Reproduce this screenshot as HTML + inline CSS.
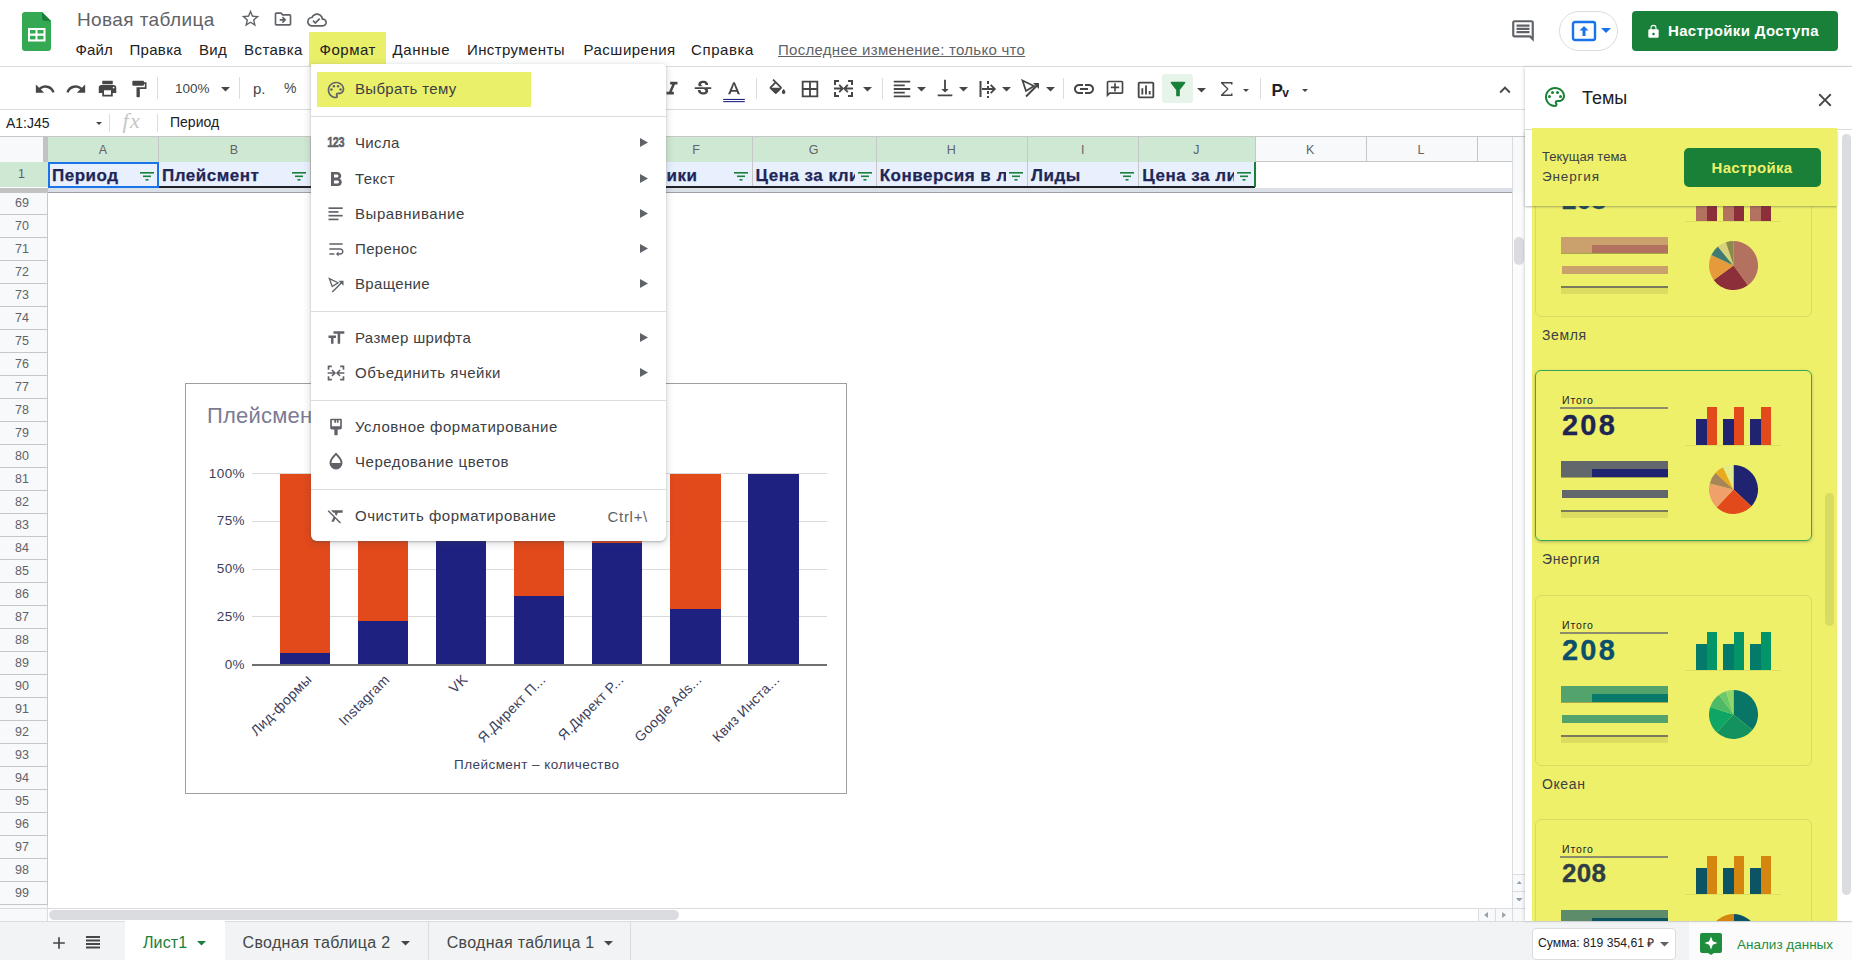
<!DOCTYPE html><html><head><meta charset="utf-8"><style>
html,body{margin:0;padding:0;width:1852px;height:960px;overflow:hidden;background:#fff;}
body{position:relative;font-family:"Liberation Sans",sans-serif;}
.t{position:absolute;white-space:nowrap;line-height:1;}
.i{position:absolute;display:block;}
.r{position:absolute;box-sizing:border-box;}
</style></head><body>
<svg class="i" style="left:22px;top:11.5px;" width="29" height="40" viewBox="0 0 29 40" fill="none"><path d="M2 0h18l9 9v27a3 3 0 0 1-3 3H3a3 3 0 0 1-3-3V3a3 3 0 0 1 3-3z" fill="#34a853"/><path d="M20 0l9 9h-6a3 3 0 0 1-3-3z" fill="#188038"/><rect x="6" y="16" width="17.5" height="13.5" fill="#fff"/><rect x="8" y="18" width="5.5" height="3.5" fill="#34a853"/><rect x="15.5" y="18" width="6" height="3.5" fill="#34a853"/><rect x="8" y="23.8" width="5.5" height="3.6" fill="#34a853"/><rect x="15.5" y="23.8" width="6" height="3.6" fill="#34a853"/></svg>
<div class="t" style="left:77px;top:10px;font-size:19px;color:#5f6368;font-weight:400;letter-spacing:0.4px;">Новая таблица</div>
<svg class="i" style="left:240px;top:8px;" width="21" height="21" viewBox="0 0 24 24" fill="#5f6368"><path d="M22 9.24l-7.19-.62L12 2 9.19 8.63 2 9.24l5.46 4.73L5.82 21 12 17.27 18.18 21l-1.63-7.03L22 9.24zM12 15.4l-3.76 2.27 1-4.28-3.32-2.88 4.38-.38L12 6.1l1.71 4.04 4.38.38-3.32 2.88 1 4.28L12 15.4z"/></svg>
<svg class="i" style="left:273px;top:9px;" width="20" height="20" viewBox="0 0 24 24" fill="#5f6368"><path d="M20 6h-8l-2-2H4c-1.1 0-1.99.9-1.99 2L2 18c0 1.1.9 2 2 2h16c1.1 0 2-.9 2-2V8c0-1.1-.9-2-2-2zm0 12H4V6h5.17l2 2H20v10zm-7.84-6H8v2h4.16l-1.59 1.59L11.99 17 16 13.01 11.99 9l-1.41 1.41L12.16 12z"/></svg>
<svg class="i" style="left:307px;top:10px;" width="20" height="20" viewBox="0 0 24 24" fill="#5f6368"><path d="M19.35 10.04C18.67 6.59 15.64 4 12 4 9.11 4 6.6 5.64 5.35 8.04 2.34 8.36 0 10.91 0 14c0 3.31 2.69 6 6 6h13c2.76 0 5-2.24 5-5 0-2.64-2.05-4.78-4.650-4.96zM19 18H6c-2.21 0-4-1.79-4-4 0-2.05 1.53-3.760 3.56-3.97l1.07-.11.5-.95C8.08 7.14 9.94 6 12 6c2.62 0 4.88 1.86 5.39 4.43l.3 1.5 1.53.11c1.56.1 2.78 1.41 2.780 2.96 0 1.65-1.35 3-3 3zm-9-3.82l-2.09-2.09L6.5 13.5 10 17l6.01-6.01-1.41-1.41z"/></svg>
<div class="r" style="left:309px;top:32px;width:77px;height:34px;background:#eaef6a;"></div>
<div class="t" style="left:75.5px;top:42px;font-size:15px;color:#202124;font-weight:400;letter-spacing:0.1px;">Файл</div>
<div class="t" style="left:129.5px;top:42px;font-size:15px;color:#202124;font-weight:400;letter-spacing:0.3px;">Правка</div>
<div class="t" style="left:199px;top:42px;font-size:15px;color:#202124;font-weight:400;letter-spacing:0.3px;">Вид</div>
<div class="t" style="left:244px;top:42px;font-size:15px;color:#202124;font-weight:400;letter-spacing:0.45px;">Вставка</div>
<div class="t" style="left:319.6px;top:42px;font-size:15px;color:#202124;font-weight:400;letter-spacing:0.5px;">Формат</div>
<div class="t" style="left:392.5px;top:42px;font-size:15px;color:#202124;font-weight:400;letter-spacing:0.6px;">Данные</div>
<div class="t" style="left:467px;top:42px;font-size:15px;color:#202124;font-weight:400;letter-spacing:0.4px;">Инструменты</div>
<div class="t" style="left:583.5px;top:42px;font-size:15px;color:#202124;font-weight:400;letter-spacing:0.5px;">Расширения</div>
<div class="t" style="left:691px;top:42px;font-size:15px;color:#202124;font-weight:400;letter-spacing:0.6px;">Справка</div>
<div class="t" style="left:778px;top:42px;font-size:15px;color:#5f6368;font-weight:400;letter-spacing:0.28px;text-decoration:underline;">Последнее изменение: только что</div>
<svg class="i" style="left:1510px;top:18px;" width="26" height="26" viewBox="0 0 24 24" fill="#5f6368"><path d="M21.99 4c0-1.1-.89-2-1.99-2H4c-1.1 0-2 .9-2 2v12c0 1.1.9 2 2 2h14l4 4-.01-18zM20 4v13.17L18.83 16H4V4h16zM6 12h12v2H6zm0-3h12v2H6zm0-3h12v2H6z"/></svg>
<div class="r" style="left:1559px;top:11px;width:59px;height:40px;border:1px solid #dadce0;border-radius:20px;"></div>
<svg class="i" style="left:1570px;top:19px;" width="28" height="24" viewBox="0 0 28 24" fill="none"><rect x="3" y="3" width="22" height="18" rx="2" fill="none" stroke="#1a73e8" stroke-width="2.4"/><path d="M14 7l-4.5 4.5h3V17h3v-5.5h3z" fill="#1a73e8"/></svg>
<svg class="i" style="left:1601px;top:28px;" width="10" height="6" viewBox="0 0 10 6" fill="none"><path d="M0 0h10L5 5z" fill="#1a73e8"/></svg>
<div class="r" style="left:1632px;top:11px;width:206px;height:40px;background:#188038;border-radius:4px;"></div>
<svg class="i" style="left:1646.5px;top:24px;" width="13" height="14.7" viewBox="0 0 15 17" fill="none"><path d="M12 6h-1V4.5a3.5 3.5 0 0 0-7 0V6H3a1.5 1.5 0 0 0-1.5 1.5v7A1.5 1.5 0 0 0 3 16h9a1.5 1.5 0 0 0 1.5-1.5v-7A1.5 1.5 0 0 0 12 6zM7.5 13a1.5 1.5 0 1 1 0-3 1.5 1.5 0 0 1 0 3zM9.8 6H5.2V4.5a2.3 2.3 0 0 1 4.6 0z" fill="#fff"/></svg>
<div class="t" style="left:1668px;top:23px;font-size:15px;color:#fff;font-weight:700;letter-spacing:0.35px;">Настройки Доступа</div>
<div class="r" style="left:0px;top:66px;width:1852px;height:1px;background:#dadce0;"></div>
<svg class="i" style="left:33.5px;top:77.5px;" width="22" height="22" viewBox="0 0 24 24" fill="#444746"><path d="M12.5 8c-2.65 0-5.05.99-6.9 2.6L2 7v9h9l-3.62-3.62c1.39-1.16 3.16-1.88 5.12-1.88 3.54 0 6.55 2.31 7.6 5.5l2.37-.78C21.08 11.030 17.15 8 12.5 8z"/></svg>
<svg class="i" style="left:65.0px;top:77.5px;" width="22" height="22" viewBox="0 0 24 24" fill="#444746"><path d="M18.4 10.6C16.55 8.99 14.15 8 11.5 8c-4.65 0-8.58 3.03-9.96 7.22L3.9 16c1.05-3.19 4.05-5.5 7.6-5.5 1.95 0 3.73.72 5.12 1.88L13 16h9V7l-3.6 3.6z"/></svg>
<svg class="i" style="left:96.5px;top:78.0px;" width="21" height="21" viewBox="0 0 24 24" fill="#444746"><path d="M19 8H5c-1.66 0-3 1.34-3 3v6h4v4h12v-4h4v-6c0-1.66-1.34-3-3-3zm-3 11H8v-5h8v5zm3-7c-.55 0-1-.45-1-1s.45-1 1-1 1 .45 1 1-.45 1-1 1zm-1-9H6v4h12V3z"/></svg>
<svg class="i" style="left:128.5px;top:78.5px;" width="20" height="20" viewBox="0 0 24 24" fill="#444746"><path d="M18 4V3c0-.55-.45-1-1-1H5c-.55 0-1 .45-1 1v4c0 .55.45 1 1 1h12c.55 0 1-.45 1-1V6h1v4H9v11c0 .55.45 1 1 1h2c.55 0 1-.45 1-1v-9h8V4h-3z"/></svg>
<div class="r" style="left:157px;top:77px;width:1px;height:22px;background:#dadce0;"></div>
<div class="t" style="left:175px;top:82px;font-size:13.5px;color:#444746;font-weight:400;letter-spacing:0px;">100%</div>
<svg class="i" style="left:221px;top:86.5px;" width="9" height="5.0" viewBox="0 0 9 5.0" fill="#444746"><path d="M0 0h9L4.5 4.5z"/></svg>
<div class="r" style="left:239px;top:77px;width:1px;height:22px;background:#dadce0;"></div>
<div class="t" style="left:253px;top:81px;font-size:15px;color:#444746;font-weight:400;letter-spacing:0px;">р.</div>
<div class="t" style="left:284px;top:81px;font-size:14px;color:#444746;font-weight:400;letter-spacing:0px;">%</div>
<svg class="i" style="left:661.0px;top:78.0px;" width="22" height="22" viewBox="0 0 24 24" fill="#444746"><path d="M10 4v3h2.21l-3.42 8H6v3h8v-3h-2.21l3.42-8H18V4z"/></svg>
<svg class="i" style="left:692.0px;top:78.0px;" width="22" height="22" viewBox="0 0 24 24" fill="#444746"><path d="M7.24 8.75c-.26-.48-.39-1.03-.39-1.67 0-.61.13-1.16.4-1.67.26-.5.63-.93 1.11-1.29.48-.35 1.05-.63 1.7-.83.66-.19 1.39-.29 2.18-.29.81 0 1.54.11 2.21.34.66.22 1.23.54 1.69.94.47.4.83.88 1.08 1.43.25.55.38 1.15.38 1.81h-3.01c0-.31-.05-.59-.15-.85-.09-.27-.24-.49-.44-.68-.2-.19-.45-.33-.75-.44-.3-.1-.66-.16-1.06-.16-.39 0-.74.04-1.030.13-.29.09-.53.21-.72.36-.19.16-.34.34-.44.55-.1.21-.15.43-.15.66 0 .48.25.88.74 1.21.38.25.77.48 1.41.7H7.39c-.05-.08-.11-.17-.15-.25zM21 12v-2H3v2h9.62c.18.07.4.14.55.2.37.17.66.34.87.51.21.17.35.36.43.57.07.2.11.43.11.69 0 .23-.05.45-.14.66-.09.2-.23.38-.42.53-.19.15-.42.26-.71.35-.29.08-.63.13-1.010.13-.43 0-.83-.04-1.18-.13s-.66-.23-.91-.42c-.25-.19-.45-.44-.59-.75-.14-.31-.25-.76-.25-1.21H6.4c0 .55.08 1.13.24 1.58.16.45.37.85.65 1.21.28.35.6.66.98.92.37.26.78.48 1.22.65.44.17.9.3 1.38.39.48.08.96.13 1.44.13.8 0 1.53-.09 2.18-.28s1.21-.45 1.67-.79c.46-.34.82-.77 1.07-1.27s.38-1.07.38-1.71c0-.6-.1-1.14-.31-1.61-.05-.11-.11-.23-.17-.33H21z"/></svg>
<svg class="i" style="left:721px;top:78px;" width="26" height="26" viewBox="0 0 24 24" fill="#444746"><path d="M9.5 12.8h5l.9 2.2h2.1L12.75 4h-1.5L6.5 15h2.1l.9-2.2zM12 5.98L13.87 11h-3.74L12 5.98z"/><rect x="2" y="19.3" width="20" height="1" fill="#1e237f"/><rect x="2" y="21.3" width="20" height="1" fill="#1e237f"/></svg>
<div class="r" style="left:756px;top:78px;width:1px;height:21px;background:#dadce0;"></div>
<svg class="i" style="left:766.5px;top:79.0px;" width="21" height="21" viewBox="0 0 24 24" fill="#444746"><path d="M16.56 8.94L7.62 0 6.21 1.41l2.38 2.38-5.15 5.150c-.59.59-.59 1.54 0 2.12l5.5 5.5c.29.29.68.44 1.06.44s.77-.15 1.06-.44l5.5-5.5c.59-.58.59-1.53 0-2.12zM5.21 10L10 5.21 14.79 10H5.21zM19 11.5s-2 2.17-2 3.5c0 1.1.9 2 2 2s2-.9 2-2c0-1.33-2-3.5-2-3.5z"/></svg>
<svg class="i" style="left:799.0px;top:77.5px;" width="22" height="22" viewBox="0 0 24 24" fill="#444746"><path d="M3 3v18h18V3H3zm8 16H5v-6h6v6zm0-8H5V5h6v6zm8 8h-6v-6h6v6zm0-8h-6V5h6v6z"/></svg>
<svg class="i" style="left:833px;top:79px;" width="21" height="19" viewBox="0 0 21 19" fill="#444746"><path d="M1 1h5v2H3v3H1zM1 13h2v3h3v2H1zM20 1h-5v2h3v3h2zM20 13h-2v3h-3v2h5z"/><path d="M1 8.5h6.5L5.5 6.5 6.8 5.2 11 9.5 6.8 13.8 5.5 12.5 7.5 10.5H1z"/><path d="M20 8.5h-6.5L15.5 6.5 14.2 5.2 10 9.5 14.2 13.8 15.5 12.5 13.5 10.5H20z" transform="translate(0 0)"/></svg>
<svg class="i" style="left:863px;top:86.5px;" width="9" height="5.0" viewBox="0 0 9 5.0" fill="#444746"><path d="M0 0h9L4.5 4.5z"/></svg>
<div class="r" style="left:882px;top:78px;width:1px;height:21px;background:#dadce0;"></div>
<svg class="i" style="left:891.0px;top:77.5px;" width="22" height="22" viewBox="0 0 24 24" fill="#444746"><path d="M15 15H3v2h12v-2zm0-8H3v2h12V7zM3 13h18v-2H3v2zm0 8h18v-2H3v2zM3 3v2h18V3H3z"/></svg>
<svg class="i" style="left:916.5px;top:86.5px;" width="9" height="5.0" viewBox="0 0 9 5.0" fill="#444746"><path d="M0 0h9L4.5 4.5z"/></svg>
<svg class="i" style="left:934.0px;top:77.0px;" width="22" height="22" viewBox="0 0 24 24" fill="#444746"><path d="M16 13h-3V3h-2v10H8l4 4 4-4zM4 19v2h16v-2H4z"/></svg>
<svg class="i" style="left:959px;top:86.5px;" width="9" height="5.0" viewBox="0 0 9 5.0" fill="#444746"><path d="M0 0h9L4.5 4.5z"/></svg>
<svg class="i" style="left:978px;top:78px;" width="19" height="22" viewBox="0 0 19 22" fill="#444746"><rect x="1.5" y="3" width="2" height="16"/><rect x="9" y="3" width="2" height="3"/><rect x="9" y="8" width="2" height="3"/><rect x="9" y="13" width="2" height="3"/><rect x="9" y="18" width="2" height="2"/><path d="M4 10h10.5l-2.5-2.5 1.3-1.3 4.8 4.8-4.8 4.8-1.3-1.3 2.5-2.5H4z"/></svg>
<svg class="i" style="left:1002px;top:86.5px;" width="9" height="5.0" viewBox="0 0 9 5.0" fill="#444746"><path d="M0 0h9L4.5 4.5z"/></svg>
<svg class="i" style="left:1021px;top:79px;" width="19" height="19" viewBox="0 0 19 19" fill="#444746"><path d="M1.5 1.5l11.5 5.5-8 5z" fill="none" stroke="#444746" stroke-width="1.8" stroke-linejoin="miter"/><path d="M5 17.5L16.5 6" stroke="#444746" stroke-width="1.9"/><path d="M12 4h6v6z"/></svg>
<svg class="i" style="left:1045.5px;top:86.5px;" width="9" height="5.0" viewBox="0 0 9 5.0" fill="#444746"><path d="M0 0h9L4.5 4.5z"/></svg>
<div class="r" style="left:1063px;top:78px;width:1px;height:21px;background:#dadce0;"></div>
<svg class="i" style="left:1072.0px;top:77.0px;" width="24" height="24" viewBox="0 0 24 24" fill="#444746"><path d="M3.9 12c0-1.71 1.39-3.1 3.1-3.1h4V7H7c-2.76 0-5 2.24-5 5s2.24 5 5 5h4v-1.9H7c-1.71 0-3.1-1.39-3.1-3.1zM8 13h8v-2H8v2zm9-6h-4v1.9h4c1.71 0 3.1 1.39 3.1 3.1s-1.39 3.1-3.1 3.1h-4V17h4c2.76 0 5-2.24 5-5s-2.24-5-5-5z"/></svg>
<svg class="i" style="left:1105.0px;top:79.0px;" width="20" height="20" viewBox="0 0 24 24" fill="#444746"><path d="M20 2H4c-1.1 0-1.99.9-1.99 2L2 22l4-4h14c1.1 0 2-.9 2-2V4c0-1.1-.9-2-2-2zm0 14H5.17L4 17.170V4h16v12zM11 5h2v4h4v2h-4v4h-2v-4H7V9h4z"/></svg>
<svg class="i" style="left:1135.0px;top:78.5px;" width="22" height="22" viewBox="0 0 24 24" fill="#444746"><path d="M19 3H5c-1.1 0-2 .9-2 2v14c0 1.1.9 2 2 2h14c1.1 0 2-.9 2-2V5c0-1.1-.9-2-2-2zm0 16H5V5h14v14zM7 10h2v7H7zm4-3h2v10h-2zm4 6h2v4h-2z"/></svg>
<div class="r" style="left:1162px;top:74px;width:31px;height:29px;background:#e6f4ea;border-radius:3px;"></div>
<svg class="i" style="left:1166.5px;top:78.0px;" width="22" height="22" viewBox="0 0 24 24" fill="#188038"><path d="M4.25 5.61C6.27 8.2 10 13 10 13v6c0 .55.45 1 1 1h2c.55 0 1-.45 1-1v-6s3.72-4.8 5.74-7.39c.51-.66.04-1.61-.79-1.61H5.04c-.83 0-1.3.95-.79 1.61z"/></svg>
<svg class="i" style="left:1197px;top:88px;" width="9" height="5.0" viewBox="0 0 9 5.0" fill="#444746"><path d="M0 0h9L4.5 4.5z"/></svg>
<svg class="i" style="left:1219.5px;top:80.5px;" width="13" height="16" viewBox="0 0 13 16" fill="#444746"><path d="M12.5 1H1v1.3L7 8 1 13.7V15h11.5v-2.5H11V13.5H3.3L8.7 8 3.3 2.5H11v1h1.5z"/></svg>
<svg class="i" style="left:1242.5px;top:88.5px;" width="6" height="3.5" viewBox="0 0 6 3.5" fill="#444746"><path d="M0 0h6L3.0 3.0z"/></svg>
<div class="r" style="left:1259.5px;top:78px;width:1px;height:21px;background:#dadce0;"></div>
<div class="t" style="left:1271.5px;top:82px;font-size:17px;color:#202124;font-weight:700;letter-spacing:-0.5px;">Р<span style="font-size:12px;position:relative;top:1px;letter-spacing:0">v</span></div>
<svg class="i" style="left:1301.5px;top:88.5px;" width="6" height="3.5" viewBox="0 0 6 3.5" fill="#444746"><path d="M0 0h6L3.0 3.0z"/></svg>
<svg class="i" style="left:1493.5px;top:78.5px;" width="22" height="22" viewBox="0 0 24 24" fill="#444746"><path d="M7.41 15.41L12 10.83l4.59 4.58L18 14l-6-6-6 6z"/></svg>
<div class="r" style="left:0px;top:109px;width:1525px;height:1px;background:#dadce0;"></div>
<div class="t" style="left:6px;top:116px;font-size:14px;color:#202124;font-weight:400;letter-spacing:0px;">A1:J45</div>
<svg class="i" style="left:95.5px;top:122px;" width="6" height="3.5" viewBox="0 0 6 3.5" fill="#444746"><path d="M0 0h6L3.0 3.0z"/></svg>
<div class="r" style="left:109px;top:114px;width:1px;height:18px;background:#dadce0;"></div>
<div class="t" style="left:122.5px;top:110px;font-size:22px;color:#c4c7c5;font-weight:400;letter-spacing:1.5px;font-family:'Liberation Serif',serif;"><i>fx</i></div>
<div class="r" style="left:157px;top:114px;width:1px;height:18px;background:#dadce0;"></div>
<div class="t" style="left:170px;top:115px;font-size:14px;color:#202124;font-weight:400;letter-spacing:0px;">Период</div>
<div class="r" style="left:0px;top:136px;width:1525px;height:1px;background:#c7c7c7;"></div>
<div class="r" style="left:0px;top:137px;width:1512px;height:25px;background:#f8f9fa;"></div>
<div class="r" style="left:48px;top:137px;width:1206.6px;height:25px;background:#cfe8d3;"></div>
<div class="r" style="left:43px;top:137px;width:5px;height:25px;background:#c2c2c2;"></div>
<div class="r" style="left:158px;top:137px;width:1px;height:25px;background:#c7c7c7;"></div>
<div class="t" style="left:98.0px;top:143.5px;font-size:12.5px;color:#5f6368;font-weight:400;letter-spacing:0px;"><span style="display:inline-block;width:10px;text-align:center">A</span></div>
<div class="r" style="left:310px;top:137px;width:1px;height:25px;background:#c7c7c7;"></div>
<div class="t" style="left:229.0px;top:143.5px;font-size:12.5px;color:#5f6368;font-weight:400;letter-spacing:0px;"><span style="display:inline-block;width:10px;text-align:center">B</span></div>
<div class="r" style="left:420px;top:137px;width:1px;height:25px;background:#c7c7c7;"></div>
<div class="t" style="left:360.0px;top:143.5px;font-size:12.5px;color:#5f6368;font-weight:400;letter-spacing:0px;"><span style="display:inline-block;width:10px;text-align:center">C</span></div>
<div class="r" style="left:530px;top:137px;width:1px;height:25px;background:#c7c7c7;"></div>
<div class="t" style="left:470.0px;top:143.5px;font-size:12.5px;color:#5f6368;font-weight:400;letter-spacing:0px;"><span style="display:inline-block;width:10px;text-align:center">D</span></div>
<div class="r" style="left:640.4px;top:137px;width:1px;height:25px;background:#c7c7c7;"></div>
<div class="t" style="left:580.2px;top:143.5px;font-size:12.5px;color:#5f6368;font-weight:400;letter-spacing:0px;"><span style="display:inline-block;width:10px;text-align:center">E</span></div>
<div class="r" style="left:751.6px;top:137px;width:1px;height:25px;background:#c7c7c7;"></div>
<div class="t" style="left:691.0px;top:143.5px;font-size:12.5px;color:#5f6368;font-weight:400;letter-spacing:0px;"><span style="display:inline-block;width:10px;text-align:center">F</span></div>
<div class="r" style="left:875.7px;top:137px;width:1px;height:25px;background:#c7c7c7;"></div>
<div class="t" style="left:808.6500000000001px;top:143.5px;font-size:12.5px;color:#5f6368;font-weight:400;letter-spacing:0px;"><span style="display:inline-block;width:10px;text-align:center">G</span></div>
<div class="r" style="left:1027px;top:137px;width:1px;height:25px;background:#c7c7c7;"></div>
<div class="t" style="left:946.35px;top:143.5px;font-size:12.5px;color:#5f6368;font-weight:400;letter-spacing:0px;"><span style="display:inline-block;width:10px;text-align:center">H</span></div>
<div class="r" style="left:1138.3px;top:137px;width:1px;height:25px;background:#c7c7c7;"></div>
<div class="t" style="left:1077.65px;top:143.5px;font-size:12.5px;color:#5f6368;font-weight:400;letter-spacing:0px;"><span style="display:inline-block;width:10px;text-align:center">I</span></div>
<div class="r" style="left:1254.6px;top:137px;width:1px;height:25px;background:#c7c7c7;"></div>
<div class="t" style="left:1191.4499999999998px;top:143.5px;font-size:12.5px;color:#5f6368;font-weight:400;letter-spacing:0px;"><span style="display:inline-block;width:10px;text-align:center">J</span></div>
<div class="r" style="left:1365.6px;top:137px;width:1px;height:25px;background:#c7c7c7;"></div>
<div class="t" style="left:1305.1px;top:143.5px;font-size:12.5px;color:#5f6368;font-weight:400;letter-spacing:0px;"><span style="display:inline-block;width:10px;text-align:center">K</span></div>
<div class="r" style="left:1476.5px;top:137px;width:1px;height:25px;background:#c7c7c7;"></div>
<div class="t" style="left:1416.05px;top:143.5px;font-size:12.5px;color:#5f6368;font-weight:400;letter-spacing:0px;"><span style="display:inline-block;width:10px;text-align:center">L</span></div>
<div class="r" style="left:1587px;top:137px;width:1px;height:25px;background:#c7c7c7;"></div>
<div class="t" style="left:1526.75px;top:143.5px;font-size:12.5px;color:#5f6368;font-weight:400;letter-spacing:0px;"><span style="display:inline-block;width:10px;text-align:center">M</span></div>
<div class="r" style="left:48px;top:161.5px;width:1206.6px;height:1.5px;background:#188038;"></div>
<div class="r" style="left:1254.6px;top:161px;width:257.4000000000001px;height:1px;background:#c7c7c7;"></div>
<div class="r" style="left:0px;top:162px;width:48px;height:25px;background:#cfe8d3;"></div>
<div class="t" style="left:18px;top:168px;font-size:12.5px;color:#5f6368;font-weight:400;letter-spacing:0px;">1</div>
<div class="r" style="left:48px;top:162px;width:1206.6px;height:25px;background:#e8f0fe;"></div>
<div class="r" style="left:48px;top:162px;width:89px;height:25px;overflow:hidden;"><div class="t" style="left:4px;top:4.5px;font-size:17px;font-weight:700;color:#1f2656;letter-spacing:0.5px;-webkit-text-stroke:0.25px #1f2656;">Период</div></div>
<div class="r" style="left:158px;top:162px;width:1px;height:25px;background:#c7c7c7;"></div>
<svg class="i" style="left:140px;top:172px;" width="14" height="9" viewBox="0 0 14 9" fill="#188038"><rect x="0" y="0" width="14" height="1.6"/><rect x="3" y="3.5" width="8" height="1.6"/><rect x="5.5" y="7" width="3" height="1.6"/></svg>
<div class="r" style="left:158px;top:162px;width:131px;height:25px;overflow:hidden;"><div class="t" style="left:4px;top:4.5px;font-size:17px;font-weight:700;color:#1f2656;letter-spacing:0.5px;-webkit-text-stroke:0.25px #1f2656;">Плейсмент</div></div>
<div class="r" style="left:310px;top:162px;width:1px;height:25px;background:#c7c7c7;"></div>
<svg class="i" style="left:292px;top:172px;" width="14" height="9" viewBox="0 0 14 9" fill="#188038"><rect x="0" y="0" width="14" height="1.6"/><rect x="3" y="3.5" width="8" height="1.6"/><rect x="5.5" y="7" width="3" height="1.6"/></svg>
<div class="r" style="left:310px;top:162px;width:89px;height:25px;overflow:hidden;"><div class="t" style="left:4px;top:4.5px;font-size:17px;font-weight:700;color:#1f2656;letter-spacing:0.5px;-webkit-text-stroke:0.25px #1f2656;"></div></div>
<div class="r" style="left:420px;top:162px;width:1px;height:25px;background:#c7c7c7;"></div>
<svg class="i" style="left:402px;top:172px;" width="14" height="9" viewBox="0 0 14 9" fill="#188038"><rect x="0" y="0" width="14" height="1.6"/><rect x="3" y="3.5" width="8" height="1.6"/><rect x="5.5" y="7" width="3" height="1.6"/></svg>
<div class="r" style="left:420px;top:162px;width:89px;height:25px;overflow:hidden;"><div class="t" style="left:4px;top:4.5px;font-size:17px;font-weight:700;color:#1f2656;letter-spacing:0.5px;-webkit-text-stroke:0.25px #1f2656;"></div></div>
<div class="r" style="left:530px;top:162px;width:1px;height:25px;background:#c7c7c7;"></div>
<svg class="i" style="left:512px;top:172px;" width="14" height="9" viewBox="0 0 14 9" fill="#188038"><rect x="0" y="0" width="14" height="1.6"/><rect x="3" y="3.5" width="8" height="1.6"/><rect x="5.5" y="7" width="3" height="1.6"/></svg>
<div class="r" style="left:530px;top:162px;width:89.39999999999998px;height:25px;overflow:hidden;"><div class="t" style="left:4px;top:4.5px;font-size:17px;font-weight:700;color:#1f2656;letter-spacing:0.5px;-webkit-text-stroke:0.25px #1f2656;"></div></div>
<div class="r" style="left:640.4px;top:162px;width:1px;height:25px;background:#c7c7c7;"></div>
<svg class="i" style="left:622.4px;top:172px;" width="14" height="9" viewBox="0 0 14 9" fill="#188038"><rect x="0" y="0" width="14" height="1.6"/><rect x="3" y="3.5" width="8" height="1.6"/><rect x="5.5" y="7" width="3" height="1.6"/></svg>
<div class="r" style="left:640.4px;top:162px;width:90.20000000000005px;height:25px;overflow:hidden;"><div class="t" style="left:4px;top:4.5px;font-size:17px;font-weight:700;color:#1f2656;letter-spacing:0.5px;-webkit-text-stroke:0.25px #1f2656;">Клики</div></div>
<div class="r" style="left:751.6px;top:162px;width:1px;height:25px;background:#c7c7c7;"></div>
<svg class="i" style="left:733.6px;top:172px;" width="14" height="9" viewBox="0 0 14 9" fill="#188038"><rect x="0" y="0" width="14" height="1.6"/><rect x="3" y="3.5" width="8" height="1.6"/><rect x="5.5" y="7" width="3" height="1.6"/></svg>
<div class="r" style="left:751.6px;top:162px;width:103.10000000000002px;height:25px;overflow:hidden;"><div class="t" style="left:4px;top:4.5px;font-size:17px;font-weight:700;color:#1f2656;letter-spacing:0.5px;-webkit-text-stroke:0.25px #1f2656;">Цена за клик</div></div>
<div class="r" style="left:875.7px;top:162px;width:1px;height:25px;background:#c7c7c7;"></div>
<svg class="i" style="left:857.7px;top:172px;" width="14" height="9" viewBox="0 0 14 9" fill="#188038"><rect x="0" y="0" width="14" height="1.6"/><rect x="3" y="3.5" width="8" height="1.6"/><rect x="5.5" y="7" width="3" height="1.6"/></svg>
<div class="r" style="left:875.7px;top:162px;width:130.29999999999995px;height:25px;overflow:hidden;"><div class="t" style="left:4px;top:4.5px;font-size:17px;font-weight:700;color:#1f2656;letter-spacing:0.5px;-webkit-text-stroke:0.25px #1f2656;">Конверсия в лид</div></div>
<div class="r" style="left:1027px;top:162px;width:1px;height:25px;background:#c7c7c7;"></div>
<svg class="i" style="left:1009px;top:172px;" width="14" height="9" viewBox="0 0 14 9" fill="#188038"><rect x="0" y="0" width="14" height="1.6"/><rect x="3" y="3.5" width="8" height="1.6"/><rect x="5.5" y="7" width="3" height="1.6"/></svg>
<div class="r" style="left:1027px;top:162px;width:90.29999999999995px;height:25px;overflow:hidden;"><div class="t" style="left:4px;top:4.5px;font-size:17px;font-weight:700;color:#1f2656;letter-spacing:0.5px;-webkit-text-stroke:0.25px #1f2656;">Лиды</div></div>
<div class="r" style="left:1138.3px;top:162px;width:1px;height:25px;background:#c7c7c7;"></div>
<svg class="i" style="left:1120.3px;top:172px;" width="14" height="9" viewBox="0 0 14 9" fill="#188038"><rect x="0" y="0" width="14" height="1.6"/><rect x="3" y="3.5" width="8" height="1.6"/><rect x="5.5" y="7" width="3" height="1.6"/></svg>
<div class="r" style="left:1138.3px;top:162px;width:95.29999999999995px;height:25px;overflow:hidden;"><div class="t" style="left:4px;top:4.5px;font-size:17px;font-weight:700;color:#1f2656;letter-spacing:0.5px;-webkit-text-stroke:0.25px #1f2656;">Цена за лид</div></div>
<div class="r" style="left:1254.6px;top:162px;width:1px;height:25px;background:#c7c7c7;"></div>
<svg class="i" style="left:1236.6px;top:172px;" width="14" height="9" viewBox="0 0 14 9" fill="#188038"><rect x="0" y="0" width="14" height="1.6"/><rect x="3" y="3.5" width="8" height="1.6"/><rect x="5.5" y="7" width="3" height="1.6"/></svg>
<div class="r" style="left:48px;top:186px;width:1206.6px;height:1.5px;background:#202124;"></div>
<div class="r" style="left:1253.6px;top:162px;width:2px;height:25px;background:#188038;"></div>
<div class="r" style="left:48px;top:162px;width:110.5px;height:25.5px;border:2px solid #1a73e8;"></div>
<div class="r" style="left:0px;top:187.5px;width:1512px;height:5px;background:#dadfe8;"></div>
<div class="r" style="left:0px;top:191.5px;width:1512px;height:1.5px;background:#9aa0a6;"></div>
<div class="r" style="left:0px;top:187.5px;width:48px;height:5px;background:#c2c2c2;"></div>
<div class="r" style="left:0px;top:193px;width:48px;height:720px;background:#f8f9fa;"></div>
<div class="r" style="left:47px;top:193px;width:1px;height:715px;background:#c7c7c7;"></div>
<div class="r" style="left:0px;top:214px;width:47px;height:1px;background:#c7c7c7;"></div>
<div class="t" style="left:0px;top:196.5px;font-size:12.5px;color:#5f6368;font-weight:400;letter-spacing:0px;"><span style="display:inline-block;width:44px;text-align:center">69</span></div>
<div class="r" style="left:0px;top:237px;width:47px;height:1px;background:#c7c7c7;"></div>
<div class="t" style="left:0px;top:219.5px;font-size:12.5px;color:#5f6368;font-weight:400;letter-spacing:0px;"><span style="display:inline-block;width:44px;text-align:center">70</span></div>
<div class="r" style="left:0px;top:260px;width:47px;height:1px;background:#c7c7c7;"></div>
<div class="t" style="left:0px;top:242.5px;font-size:12.5px;color:#5f6368;font-weight:400;letter-spacing:0px;"><span style="display:inline-block;width:44px;text-align:center">71</span></div>
<div class="r" style="left:0px;top:283px;width:47px;height:1px;background:#c7c7c7;"></div>
<div class="t" style="left:0px;top:265.5px;font-size:12.5px;color:#5f6368;font-weight:400;letter-spacing:0px;"><span style="display:inline-block;width:44px;text-align:center">72</span></div>
<div class="r" style="left:0px;top:306px;width:47px;height:1px;background:#c7c7c7;"></div>
<div class="t" style="left:0px;top:288.5px;font-size:12.5px;color:#5f6368;font-weight:400;letter-spacing:0px;"><span style="display:inline-block;width:44px;text-align:center">73</span></div>
<div class="r" style="left:0px;top:329px;width:47px;height:1px;background:#c7c7c7;"></div>
<div class="t" style="left:0px;top:311.5px;font-size:12.5px;color:#5f6368;font-weight:400;letter-spacing:0px;"><span style="display:inline-block;width:44px;text-align:center">74</span></div>
<div class="r" style="left:0px;top:352px;width:47px;height:1px;background:#c7c7c7;"></div>
<div class="t" style="left:0px;top:334.5px;font-size:12.5px;color:#5f6368;font-weight:400;letter-spacing:0px;"><span style="display:inline-block;width:44px;text-align:center">75</span></div>
<div class="r" style="left:0px;top:375px;width:47px;height:1px;background:#c7c7c7;"></div>
<div class="t" style="left:0px;top:357.5px;font-size:12.5px;color:#5f6368;font-weight:400;letter-spacing:0px;"><span style="display:inline-block;width:44px;text-align:center">76</span></div>
<div class="r" style="left:0px;top:398px;width:47px;height:1px;background:#c7c7c7;"></div>
<div class="t" style="left:0px;top:380.5px;font-size:12.5px;color:#5f6368;font-weight:400;letter-spacing:0px;"><span style="display:inline-block;width:44px;text-align:center">77</span></div>
<div class="r" style="left:0px;top:421px;width:47px;height:1px;background:#c7c7c7;"></div>
<div class="t" style="left:0px;top:403.5px;font-size:12.5px;color:#5f6368;font-weight:400;letter-spacing:0px;"><span style="display:inline-block;width:44px;text-align:center">78</span></div>
<div class="r" style="left:0px;top:444px;width:47px;height:1px;background:#c7c7c7;"></div>
<div class="t" style="left:0px;top:426.5px;font-size:12.5px;color:#5f6368;font-weight:400;letter-spacing:0px;"><span style="display:inline-block;width:44px;text-align:center">79</span></div>
<div class="r" style="left:0px;top:467px;width:47px;height:1px;background:#c7c7c7;"></div>
<div class="t" style="left:0px;top:449.5px;font-size:12.5px;color:#5f6368;font-weight:400;letter-spacing:0px;"><span style="display:inline-block;width:44px;text-align:center">80</span></div>
<div class="r" style="left:0px;top:490px;width:47px;height:1px;background:#c7c7c7;"></div>
<div class="t" style="left:0px;top:472.5px;font-size:12.5px;color:#5f6368;font-weight:400;letter-spacing:0px;"><span style="display:inline-block;width:44px;text-align:center">81</span></div>
<div class="r" style="left:0px;top:513px;width:47px;height:1px;background:#c7c7c7;"></div>
<div class="t" style="left:0px;top:495.5px;font-size:12.5px;color:#5f6368;font-weight:400;letter-spacing:0px;"><span style="display:inline-block;width:44px;text-align:center">82</span></div>
<div class="r" style="left:0px;top:536px;width:47px;height:1px;background:#c7c7c7;"></div>
<div class="t" style="left:0px;top:518.5px;font-size:12.5px;color:#5f6368;font-weight:400;letter-spacing:0px;"><span style="display:inline-block;width:44px;text-align:center">83</span></div>
<div class="r" style="left:0px;top:559px;width:47px;height:1px;background:#c7c7c7;"></div>
<div class="t" style="left:0px;top:541.5px;font-size:12.5px;color:#5f6368;font-weight:400;letter-spacing:0px;"><span style="display:inline-block;width:44px;text-align:center">84</span></div>
<div class="r" style="left:0px;top:582px;width:47px;height:1px;background:#c7c7c7;"></div>
<div class="t" style="left:0px;top:564.5px;font-size:12.5px;color:#5f6368;font-weight:400;letter-spacing:0px;"><span style="display:inline-block;width:44px;text-align:center">85</span></div>
<div class="r" style="left:0px;top:605px;width:47px;height:1px;background:#c7c7c7;"></div>
<div class="t" style="left:0px;top:587.5px;font-size:12.5px;color:#5f6368;font-weight:400;letter-spacing:0px;"><span style="display:inline-block;width:44px;text-align:center">86</span></div>
<div class="r" style="left:0px;top:628px;width:47px;height:1px;background:#c7c7c7;"></div>
<div class="t" style="left:0px;top:610.5px;font-size:12.5px;color:#5f6368;font-weight:400;letter-spacing:0px;"><span style="display:inline-block;width:44px;text-align:center">87</span></div>
<div class="r" style="left:0px;top:651px;width:47px;height:1px;background:#c7c7c7;"></div>
<div class="t" style="left:0px;top:633.5px;font-size:12.5px;color:#5f6368;font-weight:400;letter-spacing:0px;"><span style="display:inline-block;width:44px;text-align:center">88</span></div>
<div class="r" style="left:0px;top:674px;width:47px;height:1px;background:#c7c7c7;"></div>
<div class="t" style="left:0px;top:656.5px;font-size:12.5px;color:#5f6368;font-weight:400;letter-spacing:0px;"><span style="display:inline-block;width:44px;text-align:center">89</span></div>
<div class="r" style="left:0px;top:697px;width:47px;height:1px;background:#c7c7c7;"></div>
<div class="t" style="left:0px;top:679.5px;font-size:12.5px;color:#5f6368;font-weight:400;letter-spacing:0px;"><span style="display:inline-block;width:44px;text-align:center">90</span></div>
<div class="r" style="left:0px;top:720px;width:47px;height:1px;background:#c7c7c7;"></div>
<div class="t" style="left:0px;top:702.5px;font-size:12.5px;color:#5f6368;font-weight:400;letter-spacing:0px;"><span style="display:inline-block;width:44px;text-align:center">91</span></div>
<div class="r" style="left:0px;top:743px;width:47px;height:1px;background:#c7c7c7;"></div>
<div class="t" style="left:0px;top:725.5px;font-size:12.5px;color:#5f6368;font-weight:400;letter-spacing:0px;"><span style="display:inline-block;width:44px;text-align:center">92</span></div>
<div class="r" style="left:0px;top:766px;width:47px;height:1px;background:#c7c7c7;"></div>
<div class="t" style="left:0px;top:748.5px;font-size:12.5px;color:#5f6368;font-weight:400;letter-spacing:0px;"><span style="display:inline-block;width:44px;text-align:center">93</span></div>
<div class="r" style="left:0px;top:789px;width:47px;height:1px;background:#c7c7c7;"></div>
<div class="t" style="left:0px;top:771.5px;font-size:12.5px;color:#5f6368;font-weight:400;letter-spacing:0px;"><span style="display:inline-block;width:44px;text-align:center">94</span></div>
<div class="r" style="left:0px;top:812px;width:47px;height:1px;background:#c7c7c7;"></div>
<div class="t" style="left:0px;top:794.5px;font-size:12.5px;color:#5f6368;font-weight:400;letter-spacing:0px;"><span style="display:inline-block;width:44px;text-align:center">95</span></div>
<div class="r" style="left:0px;top:835px;width:47px;height:1px;background:#c7c7c7;"></div>
<div class="t" style="left:0px;top:817.5px;font-size:12.5px;color:#5f6368;font-weight:400;letter-spacing:0px;"><span style="display:inline-block;width:44px;text-align:center">96</span></div>
<div class="r" style="left:0px;top:858px;width:47px;height:1px;background:#c7c7c7;"></div>
<div class="t" style="left:0px;top:840.5px;font-size:12.5px;color:#5f6368;font-weight:400;letter-spacing:0px;"><span style="display:inline-block;width:44px;text-align:center">97</span></div>
<div class="r" style="left:0px;top:881px;width:47px;height:1px;background:#c7c7c7;"></div>
<div class="t" style="left:0px;top:863.5px;font-size:12.5px;color:#5f6368;font-weight:400;letter-spacing:0px;"><span style="display:inline-block;width:44px;text-align:center">98</span></div>
<div class="r" style="left:0px;top:904px;width:47px;height:1px;background:#c7c7c7;"></div>
<div class="t" style="left:0px;top:886.5px;font-size:12.5px;color:#5f6368;font-weight:400;letter-spacing:0px;"><span style="display:inline-block;width:44px;text-align:center">99</span></div>
<div class="r" style="left:1512px;top:137px;width:13px;height:783px;background:#fcfcfc;border-left:1px solid #dadce0;"></div>
<div class="r" style="left:1513px;top:137px;width:12px;height:56px;background:#f8f9fa;"></div>
<div class="r" style="left:1514px;top:237px;width:10px;height:28px;background:#dadce0;border-radius:5px;"></div>
<div class="r" style="left:1513px;top:874px;width:12px;height:34px;background:#f8f9fa;"></div>
<div class="r" style="left:1512px;top:874px;width:13px;height:1px;background:#dadce0;"></div>
<div class="r" style="left:1512px;top:891px;width:13px;height:1px;background:#dadce0;"></div>
<svg class="i" style="left:1516px;top:880.5px;" width="6.5" height="3.8" viewBox="0 0 7 4" fill="#9aa0a6"><path d="M0 4h7L3.5 0z"/></svg>
<svg class="i" style="left:1516px;top:897.5px;" width="6.5" height="3.8" viewBox="0 0 7 4" fill="#9aa0a6"><path d="M0 0h7L3.5 4z"/></svg>
<div class="r" style="left:0px;top:905px;width:48px;height:16px;background:#f8f9fa;"></div>
<div class="r" style="left:0px;top:908px;width:1512px;height:13px;background:#fff;border-top:1px solid #dadce0;"></div>
<div class="r" style="left:0px;top:909px;width:47px;height:12px;background:#f8f9fa;"></div>
<div class="r" style="left:47px;top:905px;width:1px;height:16px;background:#dadce0;"></div>
<div class="r" style="left:49px;top:910px;width:629.5px;height:10px;background:#dadce0;border-radius:5px;"></div>
<div class="r" style="left:1478.5px;top:909px;width:34px;height:12px;background:#f8f9fa;"></div>
<svg class="i" style="left:1484.3px;top:912px;" width="4.2" height="6" viewBox="0 0 4 6" fill="#9aa0a6"><path d="M4 0v6L0 3z"/></svg>
<svg class="i" style="left:1502.3px;top:912px;" width="4.2" height="6" viewBox="0 0 4 6" fill="#9aa0a6"><path d="M0 0v6l4-3z"/></svg>
<div class="r" style="left:1478px;top:908px;width:1px;height:13px;background:#dadce0;"></div>
<div class="r" style="left:1495px;top:908px;width:1px;height:13px;background:#dadce0;"></div>
<div class="r" style="left:1512px;top:908px;width:13px;height:13px;background:#f8f9fa;border-left:1px solid #dadce0;border-top:1px solid #dadce0;"></div>
<div class="r" style="left:0px;top:921px;width:1852px;height:39px;background:#f1f3f4;border-top:1px solid #dadce0;"></div>
<svg class="i" style="left:49.0px;top:932.5px;" width="20" height="20" viewBox="0 0 24 24" fill="#444746"><path d="M19 13h-6v6h-2v-6H5v-2h6V5h2v6h6v2z"/></svg>
<svg class="i" style="left:86px;top:935px;" width="14" height="14" viewBox="0 0 14 14" fill="#444746"><rect x="0" y="1" width="14" height="2"/><rect x="0" y="4.5" width="14" height="2"/><rect x="0" y="8" width="14" height="2"/><rect x="0" y="11.5" width="14" height="2"/></svg>
<div class="r" style="left:124.7px;top:921px;width:100.2px;height:39px;background:#fff;"></div>
<div class="t" style="left:143px;top:934.5px;font-size:16px;color:#188038;font-weight:400;letter-spacing:0.1px;">Лист1</div>
<svg class="i" style="left:197px;top:940.5px;" width="9" height="5.0" viewBox="0 0 9 5.0" fill="#188038"><path d="M0 0h9L4.5 4.5z"/></svg>
<div class="t" style="left:242.6px;top:934.5px;font-size:16px;color:#444746;font-weight:400;letter-spacing:0.3px;">Сводная таблица 2</div>
<svg class="i" style="left:401.4px;top:940.5px;" width="9" height="5.0" viewBox="0 0 9 5.0" fill="#444746"><path d="M0 0h9L4.5 4.5z"/></svg>
<div class="r" style="left:428px;top:921px;width:1px;height:39px;background:#dadce0;"></div>
<div class="t" style="left:446.7px;top:934.5px;font-size:16px;color:#444746;font-weight:400;letter-spacing:0.3px;">Сводная таблица 1</div>
<svg class="i" style="left:603.6px;top:940.5px;" width="9" height="5.0" viewBox="0 0 9 5.0" fill="#444746"><path d="M0 0h9L4.5 4.5z"/></svg>
<div class="r" style="left:630px;top:921px;width:1px;height:39px;background:#dadce0;"></div>
<div class="r" style="left:1531.7px;top:927.5px;width:144.5px;height:32px;background:#fff;border:1px solid #dadce0;border-radius:4px;"></div>
<div class="t" style="left:1538px;top:937px;font-size:12.2px;color:#202124;font-weight:400;letter-spacing:0px;">Сумма: 819 354,61 ₽</div>
<svg class="i" style="left:1659.5px;top:941.5px;" width="9" height="5.0" viewBox="0 0 9 5.0" fill="#5f6368"><path d="M0 0h9L4.5 4.5z"/></svg>
<div class="r" style="left:1688.5px;top:926px;width:1px;height:34px;background:#dadce0;"></div>
<div class="r" style="left:1689px;top:922px;width:163px;height:38px;background:#fbfbfb;"></div>
<svg class="i" style="left:1700px;top:933px;" width="22" height="22" viewBox="0 0 22 22" fill="none"><path d="M2 0h18a2 2 0 0 1 2 2v16a2 2 0 0 1-2 2h-6l-3 2-3-2H2a2 2 0 0 1-2-2V2a2 2 0 0 1 2-2z" fill="#1e8e3e"/><path d="M11 3.5l1.8 4.7 4.7 1.8-4.7 1.8L11 16.5l-1.8-4.7L4.5 10l4.7-1.8z" fill="#fff"/></svg>
<div class="t" style="left:1737px;top:937.5px;font-size:13.5px;color:#1e8e3e;font-weight:400;letter-spacing:0px;">Анализ данных</div>
<div class="r" style="left:185px;top:383px;width:662px;height:411px;background:#fff;border:1px solid #9e9e9e;"></div>
<div class="t" style="left:207px;top:404.5px;font-size:22px;color:#7b7b93;font-weight:400;letter-spacing:0.2px;">Плейсмент – количество</div>
<div class="r" style="left:251.5px;top:473.3px;width:575px;height:1px;background:#d9d9d9;"></div>
<div class="t" style="left:180px;top:466.8px;width:65px;text-align:right;font-size:13.5px;color:#3c3e5c;letter-spacing:0.4px">100%</div>
<div class="r" style="left:251.5px;top:520.9px;width:575px;height:1px;background:#d9d9d9;"></div>
<div class="t" style="left:180px;top:514.4px;width:65px;text-align:right;font-size:13.5px;color:#3c3e5c;letter-spacing:0.4px">75%</div>
<div class="r" style="left:251.5px;top:568.5px;width:575px;height:1px;background:#d9d9d9;"></div>
<div class="t" style="left:180px;top:562px;width:65px;text-align:right;font-size:13.5px;color:#3c3e5c;letter-spacing:0.4px">50%</div>
<div class="r" style="left:251.5px;top:616.4px;width:575px;height:1px;background:#d9d9d9;"></div>
<div class="t" style="left:180px;top:609.9px;width:65px;text-align:right;font-size:13.5px;color:#3c3e5c;letter-spacing:0.4px">25%</div>
<div class="t" style="left:180px;top:657.6px;width:65px;text-align:right;font-size:13.5px;color:#3c3e5c;letter-spacing:0.4px">0%</div>
<div class="r" style="left:279.5px;top:473.8px;width:50.5px;height:190.8px;background:#e2491b;"></div>
<div class="r" style="left:279.5px;top:653.152px;width:50.5px;height:11.448px;background:#1e2180;"></div>
<div class="t" style="left:103.5px;top:672px;width:200px;text-align:right;font-size:14px;color:#3c3e5c;transform-origin:100% 0;transform:rotate(-45deg);letter-spacing:0.3px">Лид-формы</div>
<div class="r" style="left:357.6px;top:473.8px;width:50.5px;height:190.8px;background:#e2491b;"></div>
<div class="r" style="left:357.6px;top:620.716px;width:50.5px;height:43.88400000000001px;background:#1e2180;"></div>
<div class="t" style="left:181.60000000000002px;top:672px;width:200px;text-align:right;font-size:14px;color:#3c3e5c;transform-origin:100% 0;transform:rotate(-45deg);letter-spacing:0.3px">Instagram</div>
<div class="r" style="left:435.7px;top:473.8px;width:50.5px;height:190.8px;background:#e2491b;"></div>
<div class="r" style="left:435.7px;top:473.8px;width:50.5px;height:190.8px;background:#1e2180;"></div>
<div class="t" style="left:259.7px;top:672px;width:200px;text-align:right;font-size:14px;color:#3c3e5c;transform-origin:100% 0;transform:rotate(-45deg);letter-spacing:0.3px">VK</div>
<div class="r" style="left:513.8px;top:473.8px;width:50.5px;height:190.8px;background:#e2491b;"></div>
<div class="r" style="left:513.8px;top:595.912px;width:50.5px;height:68.688px;background:#1e2180;"></div>
<div class="t" style="left:337.79999999999995px;top:672px;width:200px;text-align:right;font-size:14px;color:#3c3e5c;transform-origin:100% 0;transform:rotate(-45deg);letter-spacing:0.3px">Я.Директ П...</div>
<div class="r" style="left:591.9px;top:473.8px;width:50.5px;height:190.8px;background:#e2491b;"></div>
<div class="r" style="left:591.9px;top:543.442px;width:50.5px;height:121.15800000000002px;background:#1e2180;"></div>
<div class="t" style="left:415.9px;top:672px;width:200px;text-align:right;font-size:14px;color:#3c3e5c;transform-origin:100% 0;transform:rotate(-45deg);letter-spacing:0.3px">Я.Директ Р...</div>
<div class="r" style="left:670.0px;top:473.8px;width:50.5px;height:190.8px;background:#e2491b;"></div>
<div class="r" style="left:670.0px;top:608.5048px;width:50.5px;height:56.0952px;background:#1e2180;"></div>
<div class="t" style="left:494.0px;top:672px;width:200px;text-align:right;font-size:14px;color:#3c3e5c;transform-origin:100% 0;transform:rotate(-45deg);letter-spacing:0.3px">Google Ads...</div>
<div class="r" style="left:748.0999999999999px;top:473.8px;width:50.5px;height:190.8px;background:#e2491b;"></div>
<div class="r" style="left:748.0999999999999px;top:473.8px;width:50.5px;height:190.8px;background:#1e2180;"></div>
<div class="t" style="left:572.0999999999999px;top:672px;width:200px;text-align:right;font-size:14px;color:#3c3e5c;transform-origin:100% 0;transform:rotate(-45deg);letter-spacing:0.3px">Квиз Инста...</div>
<div class="r" style="left:251.5px;top:664px;width:575px;height:1.5px;background:#707070;"></div>
<div class="t" style="left:454px;top:758px;font-size:13.5px;color:#3c3e5c;font-weight:400;letter-spacing:0.45px;">Плейсмент – количество</div>
<div class="r" style="left:1525px;top:67px;width:327px;height:854px;background:#fff;box-shadow:-1px 0 3px rgba(60,64,67,0.2);"></div>
<svg class="i" style="left:1543px;top:85px;" width="24" height="24" viewBox="0 0 24 24" fill="#188038"><path d="M12 22C6.49 22 2 17.51 2 12S6.49 2 12 2s10 4.04 10 9c0 3.31-2.69 6-6 6h-1.77c-.28 0-.5.22-.5.5 0 .12.05.23.13.33.41.47.64 1.06.64 1.67 0 1.38-1.12 2.5-2.5 2.5zm0-18c-4.41 0-8 3.59-8 8s3.59 8 8 8c.28 0 .5-.22.5-.5 0-.16-.08-.28-.14-.35-.41-.46-.63-1.05-.63-1.65 0-1.38 1.12-2.5 2.5-2.5H16c2.21 0 4-1.79 4-4 0-3.86-3.59-7-8-7z"/><circle cx="6.5" cy="11.5" r="1.5"/><circle cx="9.5" cy="7.5" r="1.5"/><circle cx="14.5" cy="7.5" r="1.5"/><circle cx="17.5" cy="11.5" r="1.5"/></svg>
<div class="t" style="left:1582px;top:88.5px;font-size:18px;color:#202124;font-weight:400;letter-spacing:0px;">Темы</div>
<svg class="i" style="left:1814.0px;top:88.5px;" width="22" height="22" viewBox="0 0 24 24" fill="#444746"><path d="M19 6.41L17.59 5 12 10.59 6.41 5 5 6.41 10.59 12 5 17.59 6.41 19 12 13.41 17.59 19 19 17.59 13.41 12z"/></svg>
<div class="r" style="left:1525px;top:129px;width:327px;height:1px;background:#dadce0;"></div>
<div class="r" style="left:1842px;top:134px;width:9px;height:761px;background:#dadce0;border-radius:4.5px;"></div>
<div class="r" style="left:1532px;top:128px;width:305px;height:793px;background:#eef06a;"></div>
<div class="r" style="left:1532px;top:130px;width:305px;height:791px;overflow:hidden;">
<div class="r" style="left:3px;top:16px;width:277px;height:171px;border:1px solid #d9db62;border-radius:6px;"></div>
<div class="t" style="left:30px;top:40.5px;font-size:10.5px;color:#202124;letter-spacing:0.85px">Итого</div>
<div class="r" style="left:28px;top:53px;width:108px;height:1.5px;background:#8c8c6a"></div>
<div class="t" style="left:30px;top:56.5px;font-size:26px;font-weight:700;color:#1e4a5a;letter-spacing:0.3px;-webkit-text-stroke:0.3px #1e4a5a">208</div>
<div class="r" style="left:164.0px;top:64.8px;width:10.5px;height:26px;background:#b3715f"></div>
<div class="r" style="left:174.5px;top:53.4px;width:10.5px;height:37.4px;background:#8c2f3b"></div>
<div class="r" style="left:191.1px;top:64.8px;width:10.5px;height:26px;background:#b3715f"></div>
<div class="r" style="left:201.6px;top:53.4px;width:10.5px;height:37.4px;background:#8c2f3b"></div>
<div class="r" style="left:218.2px;top:64.8px;width:10.5px;height:26px;background:#b3715f"></div>
<div class="r" style="left:228.7px;top:53.4px;width:10.5px;height:37.4px;background:#8c2f3b"></div>
<div class="r" style="left:153px;top:90.5px;width:96px;height:1px;background:rgba(0,0,0,0.07)"></div>
<div class="r" style="left:29px;top:107px;width:107px;height:8px;background:#caa06c"></div>
<div class="r" style="left:29px;top:115px;width:31px;height:8px;background:#caa06c"></div>
<div class="r" style="left:60px;top:115px;width:76px;height:8px;background:#b3715f"></div>
<div class="r" style="left:29px;top:122.5px;width:107px;height:1px;background:rgba(0,0,0,0.3)"></div>
<div class="r" style="left:30px;top:136px;width:106px;height:8px;background:#caa06c"></div>
<div class="r" style="left:29px;top:156px;width:107px;height:1.5px;background:#7a7a5a"></div>
<div class="r" style="left:29px;top:157.5px;width:107px;height:6px;background:rgba(120,110,40,0.15)"></div>
<svg class="i" style="left:177.0px;top:110.5px" width="49.0" height="49.0" viewBox="0 0 49.0 49.0"><path d="M24.5 24.5L24.50 0.00A24.5 24.5 0 0 1 38.90 44.32z" fill="#b3715f"/><path d="M24.5 24.5L38.90 44.32A24.5 24.5 0 0 1 4.68 38.90z" fill="#8c2f3b"/><path d="M24.5 24.5L4.68 38.90A24.5 24.5 0 0 1 2.33 14.07z" fill="#e69a3c"/><path d="M24.5 24.5L2.33 14.07A24.5 24.5 0 0 1 8.88 5.62z" fill="#3f7b72"/><path d="M24.5 24.5L8.88 5.62A24.5 24.5 0 0 1 16.93 1.20z" fill="#d8d27c"/><path d="M24.5 24.5L16.93 1.20A24.5 24.5 0 0 1 24.50 0.00z" fill="#8a8a4c"/></svg>
<div class="t" style="left:10px;top:197.5px;font-size:14px;color:#3c4043;letter-spacing:0.6px">Земля</div>
<div class="r" style="left:3px;top:240px;width:277px;height:171px;border:1px solid #34a853;border-radius:6px;box-shadow:0 1px 3px rgba(60,64,67,.35);"></div>
<div class="t" style="left:30px;top:264.5px;font-size:10.5px;color:#202124;letter-spacing:0.85px">Итого</div>
<div class="r" style="left:28px;top:277px;width:108px;height:1.5px;background:#8c8c6a"></div>
<div class="t" style="left:30px;top:280.5px;font-size:29px;font-weight:700;color:#1f2553;letter-spacing:2.2px;-webkit-text-stroke:0.3px #1f2553">208</div>
<div class="r" style="left:164.0px;top:288.8px;width:10.5px;height:26px;background:#1f2370"></div>
<div class="r" style="left:174.5px;top:277.4px;width:10.5px;height:37.4px;background:#e2491b"></div>
<div class="r" style="left:191.1px;top:288.8px;width:10.5px;height:26px;background:#1f2370"></div>
<div class="r" style="left:201.6px;top:277.4px;width:10.5px;height:37.4px;background:#e2491b"></div>
<div class="r" style="left:218.2px;top:288.8px;width:10.5px;height:26px;background:#1f2370"></div>
<div class="r" style="left:228.7px;top:277.4px;width:10.5px;height:37.4px;background:#e2491b"></div>
<div class="r" style="left:153px;top:314.5px;width:96px;height:1px;background:rgba(0,0,0,0.07)"></div>
<div class="r" style="left:29px;top:331px;width:107px;height:8px;background:#62676b"></div>
<div class="r" style="left:29px;top:339px;width:31px;height:8px;background:#62676b"></div>
<div class="r" style="left:60px;top:339px;width:76px;height:8px;background:#1f2370"></div>
<div class="r" style="left:29px;top:346.5px;width:107px;height:1px;background:rgba(0,0,0,0.3)"></div>
<div class="r" style="left:30px;top:360px;width:106px;height:8px;background:#62676b"></div>
<div class="r" style="left:29px;top:380px;width:107px;height:1.5px;background:#7a7a5a"></div>
<div class="r" style="left:29px;top:381.5px;width:107px;height:6px;background:rgba(120,110,40,0.15)"></div>
<svg class="i" style="left:177.0px;top:334.5px" width="49.0" height="49.0" viewBox="0 0 49.0 49.0"><path d="M24.5 24.5L24.50 0.00A24.5 24.5 0 0 1 42.36 41.27z" fill="#1f2370"/><path d="M24.5 24.5L42.36 41.27A24.5 24.5 0 0 1 7.73 42.36z" fill="#e2491b"/><path d="M24.5 24.5L7.73 42.36A24.5 24.5 0 0 1 0.77 18.41z" fill="#f0a06a"/><path d="M24.5 24.5L0.77 18.41A24.5 24.5 0 0 1 6.64 7.73z" fill="#a88556"/><path d="M24.5 24.5L6.64 7.73A24.5 24.5 0 0 1 14.07 2.33z" fill="#e9aa1c"/><path d="M24.5 24.5L14.07 2.33A24.5 24.5 0 0 1 24.50 0.00z" fill="#e4eb8c"/></svg>
<div class="t" style="left:10px;top:421.5px;font-size:14px;color:#3c4043;letter-spacing:0.6px">Энергия</div>
<div class="r" style="left:3px;top:465px;width:277px;height:171px;border:1px solid #d9db62;border-radius:6px;"></div>
<div class="t" style="left:30px;top:489.5px;font-size:10.5px;color:#202124;letter-spacing:0.85px">Итого</div>
<div class="r" style="left:28px;top:502px;width:108px;height:1.5px;background:#8c8c6a"></div>
<div class="t" style="left:30px;top:505.5px;font-size:29px;font-weight:700;color:#0b4f6c;letter-spacing:2.2px;-webkit-text-stroke:0.3px #0b4f6c">208</div>
<div class="r" style="left:164.0px;top:513.8px;width:10.5px;height:26px;background:#037a6a"></div>
<div class="r" style="left:174.5px;top:502.4px;width:10.5px;height:37.4px;background:#039467"></div>
<div class="r" style="left:191.1px;top:513.8px;width:10.5px;height:26px;background:#037a6a"></div>
<div class="r" style="left:201.6px;top:502.4px;width:10.5px;height:37.4px;background:#039467"></div>
<div class="r" style="left:218.2px;top:513.8px;width:10.5px;height:26px;background:#037a6a"></div>
<div class="r" style="left:228.7px;top:502.4px;width:10.5px;height:37.4px;background:#039467"></div>
<div class="r" style="left:153px;top:539.5px;width:96px;height:1px;background:rgba(0,0,0,0.07)"></div>
<div class="r" style="left:29px;top:556px;width:107px;height:8px;background:#52a36c"></div>
<div class="r" style="left:29px;top:564px;width:31px;height:8px;background:#52a36c"></div>
<div class="r" style="left:60px;top:564px;width:76px;height:8px;background:#087a6c"></div>
<div class="r" style="left:29px;top:571.5px;width:107px;height:1px;background:rgba(0,0,0,0.3)"></div>
<div class="r" style="left:30px;top:585px;width:106px;height:8px;background:#52a36c"></div>
<div class="r" style="left:29px;top:605px;width:107px;height:1.5px;background:#7a7a5a"></div>
<div class="r" style="left:29px;top:606.5px;width:107px;height:6px;background:rgba(120,110,40,0.15)"></div>
<svg class="i" style="left:177.0px;top:559.5px" width="49.0" height="49.0" viewBox="0 0 49.0 49.0"><path d="M24.5 24.5L24.50 0.00A24.5 24.5 0 0 1 43.38 40.12z" fill="#087566"/><path d="M24.5 24.5L43.38 40.12A24.5 24.5 0 0 1 7.73 42.36z" fill="#13925e"/><path d="M24.5 24.5L7.73 42.36A24.5 24.5 0 0 1 1.20 16.93z" fill="#0fa565"/><path d="M24.5 24.5L1.20 16.93A24.5 24.5 0 0 1 10.10 4.68z" fill="#4cba68"/><path d="M24.5 24.5L10.10 4.68A24.5 24.5 0 0 1 16.93 1.20z" fill="#6cc86c"/><path d="M24.5 24.5L16.93 1.20A24.5 24.5 0 0 1 24.50 0.00z" fill="#8ed86a"/></svg>
<div class="t" style="left:10px;top:646.5px;font-size:14px;color:#3c4043;letter-spacing:0.6px">Океан</div>
<div class="r" style="left:3px;top:689px;width:277px;height:171px;border:1px solid #d9db62;border-radius:6px;"></div>
<div class="t" style="left:30px;top:713.5px;font-size:10.5px;color:#202124;letter-spacing:0.85px">Итого</div>
<div class="r" style="left:28px;top:726px;width:108px;height:1.5px;background:#8c8c6a"></div>
<div class="t" style="left:30px;top:729.5px;font-size:26px;font-weight:700;color:#2f3e46;letter-spacing:0.3px;-webkit-text-stroke:0.3px #2f3e46">208</div>
<div class="r" style="left:164.0px;top:737.8px;width:10.5px;height:26px;background:#0c5464"></div>
<div class="r" style="left:174.5px;top:726.4px;width:10.5px;height:37.4px;background:#d4860f"></div>
<div class="r" style="left:191.1px;top:737.8px;width:10.5px;height:26px;background:#0c5464"></div>
<div class="r" style="left:201.6px;top:726.4px;width:10.5px;height:37.4px;background:#d4860f"></div>
<div class="r" style="left:218.2px;top:737.8px;width:10.5px;height:26px;background:#0c5464"></div>
<div class="r" style="left:228.7px;top:726.4px;width:10.5px;height:37.4px;background:#d4860f"></div>
<div class="r" style="left:153px;top:763.5px;width:96px;height:1px;background:rgba(0,0,0,0.07)"></div>
<div class="r" style="left:29px;top:780px;width:107px;height:8px;background:#5c8c6a"></div>
<div class="r" style="left:29px;top:788px;width:31px;height:8px;background:#5c8c6a"></div>
<div class="r" style="left:60px;top:788px;width:76px;height:8px;background:#0c5464"></div>
<div class="r" style="left:29px;top:795.5px;width:107px;height:1px;background:rgba(0,0,0,0.3)"></div>
<div class="r" style="left:30px;top:809px;width:106px;height:8px;background:#5c8c6a"></div>
<div class="r" style="left:29px;top:829px;width:107px;height:1.5px;background:#7a7a5a"></div>
<div class="r" style="left:29px;top:830.5px;width:107px;height:6px;background:rgba(120,110,40,0.15)"></div>
<svg class="i" style="left:177.0px;top:783.5px" width="49.0" height="49.0" viewBox="0 0 49.0 49.0"><path d="M24.5 24.5L24.50 0.00A24.5 24.5 0 0 1 38.90 44.32z" fill="#0c5464"/><path d="M24.5 24.5L38.90 44.32A24.5 24.5 0 0 1 10.10 44.32z" fill="#2a6a6a"/><path d="M24.5 24.5L10.10 44.32A24.5 24.5 0 0 1 1.20 16.93z" fill="#5c8c6a"/><path d="M24.5 24.5L1.20 16.93A24.5 24.5 0 0 1 24.50 0.00z" fill="#d4860f"/></svg>
</div>
<div class="r" style="left:1825px;top:493px;width:9px;height:133px;background:#d9dc62;border-radius:4.5px;"></div>
<div class="r" style="left:1525px;top:130px;width:312px;height:76px;background:#fff;box-shadow:0 1px 2px rgba(60,64,67,.4);"></div>
<div class="r" style="left:1532px;top:128px;width:305px;height:78px;background:#eef06a;"></div>
<div class="t" style="left:1542px;top:150px;font-size:13px;color:#3c4043;font-weight:400;letter-spacing:0px;">Текущая тема</div>
<div class="t" style="left:1542px;top:170px;font-size:13.5px;color:#3c4043;font-weight:400;letter-spacing:0.85px;">Энергия</div>
<div class="r" style="left:1684px;top:148px;width:137px;height:38.5px;background:#1a7f37;border-radius:5px;"></div>
<div class="t" style="left:1711.5px;top:160px;font-size:15px;color:#eef06a;font-weight:700;letter-spacing:0.3px;">Настройка</div>
<div class="r" style="left:311px;top:64px;width:355px;height:477px;background:#fff;border-radius:0 4px 6px 6px;box-shadow:0 2px 6px 2px rgba(60,64,67,.15),0 1px 2px rgba(60,64,67,.3);"></div>
<div class="r" style="left:317px;top:72px;width:214px;height:35px;background:#ebf06a;"></div>
<svg class="i" style="left:325.5px;top:79.5px;" width="20" height="20" viewBox="0 0 24 24" fill="#5f6368"><path d="M12 22C6.49 22 2 17.51 2 12S6.49 2 12 2s10 4.04 10 9c0 3.31-2.69 6-6 6h-1.77c-.28 0-.5.22-.5.5 0 .12.05.23.13.33.41.47.64 1.06.64 1.67 0 1.38-1.12 2.5-2.5 2.5zm0-18c-4.41 0-8 3.59-8 8s3.59 8 8 8c.28 0 .5-.22.5-.5 0-.16-.08-.28-.14-.35-.41-.46-.63-1.05-.63-1.65 0-1.38 1.12-2.5 2.5-2.5H16c2.21 0 4-1.79 4-4 0-3.86-3.59-7-8-7z"/><circle cx="6.5" cy="11.5" r="1.5"/><circle cx="9.5" cy="7.5" r="1.5"/><circle cx="14.5" cy="7.5" r="1.5"/><circle cx="17.5" cy="11.5" r="1.5"/></svg>
<div class="t" style="left:355px;top:80.5px;font-size:15px;color:#3c4043;font-weight:400;letter-spacing:0.33px;">Выбрать тему</div>
<div class="r" style="left:311px;top:116px;width:355px;height:1px;background:#dadce0;"></div>
<svg class="i" style="left:325.5px;top:132.5px;" width="20" height="20" viewBox="0 0 24 24" fill="#5f6368"><text x="0" y="0" transform="translate(1.5 17.3) scale(0.9 1.2)" font-family="Liberation Sans" font-weight="700" font-size="14.5" letter-spacing="-0.6" fill="#5f6368" stroke="#5f6368" stroke-width="0.5">123</text></svg>
<div class="t" style="left:355px;top:134.5px;font-size:15px;color:#3c4043;font-weight:400;letter-spacing:0.35px;">Числа</div>
<svg class="i" style="left:640px;top:137.5px;" width="8" height="9" viewBox="0 0 8 9" fill="#5f6368"><path d="M0 0l8 4.5L0 9z"/></svg>
<svg class="i" style="left:325.5px;top:168.5px;" width="20" height="20" viewBox="0 0 24 24" fill="#5f6368"><path transform="translate(12 12) scale(1.2) translate(-12 -11)" d="M15.6 10.79c.97-.67 1.65-1.77 1.65-2.79 0-2.26-1.75-4-4-4H7v14h7.04c2.09 0 3.71-1.7 3.71-3.79 0-1.52-.86-2.82-2.15-3.42zM10 6.5h3c.83 0 1.5.67 1.5 1.5s-.67 1.5-1.5 1.5h-3v-3zm3.5 9H10v-3h3.5c.83 0 1.5.67 1.5 1.5s-.67 1.5-1.5 1.5z"/></svg>
<div class="t" style="left:355px;top:170.5px;font-size:15px;color:#3c4043;font-weight:400;letter-spacing:0.45px;">Текст</div>
<svg class="i" style="left:640px;top:173.5px;" width="8" height="9" viewBox="0 0 8 9" fill="#5f6368"><path d="M0 0l8 4.5L0 9z"/></svg>
<svg class="i" style="left:325.5px;top:203.5px;" width="20" height="20" viewBox="0 0 24 24" fill="#5f6368"><rect x="3" y="4" width="17" height="2"/><rect x="3" y="8.5" width="12" height="2"/><rect x="3" y="13" width="17" height="2"/><rect x="3" y="17.5" width="12" height="2"/></svg>
<div class="t" style="left:355px;top:205.5px;font-size:15px;color:#3c4043;font-weight:400;letter-spacing:0.55px;">Выравнивание</div>
<svg class="i" style="left:640px;top:208.5px;" width="8" height="9" viewBox="0 0 8 9" fill="#5f6368"><path d="M0 0l8 4.5L0 9z"/></svg>
<svg class="i" style="left:325.5px;top:238.5px;" width="20" height="20" viewBox="0 0 24 24" fill="#5f6368"><path d="M4 19h6v-2H4v2zM20 5H4v2h16V5zm-3 6H4v2h13.25c1.1 0 2 .9 2 2s-.9 2-2 2H15v-2l-3 3 3 3v-2h2c2.21 0 4-1.79 4-4s-1.79-4-4-4z"/></svg>
<div class="t" style="left:355px;top:240.5px;font-size:15px;color:#3c4043;font-weight:400;letter-spacing:0.35px;">Перенос</div>
<svg class="i" style="left:640px;top:243.5px;" width="8" height="9" viewBox="0 0 8 9" fill="#5f6368"><path d="M0 0l8 4.5L0 9z"/></svg>
<svg class="i" style="left:325.5px;top:274px;" width="20" height="20" viewBox="0 0 24 24" fill="#5f6368"><path d="M4 5.5l10.5 5-7 4.5z" fill="none" stroke="#5f6368" stroke-width="1.6"/><path d="M7.5 21.5L19.5 9.5" stroke="#5f6368" stroke-width="1.7"/><path d="M15 8h6v6z"/></svg>
<div class="t" style="left:355px;top:276px;font-size:15px;color:#3c4043;font-weight:400;letter-spacing:0.35px;">Вращение</div>
<svg class="i" style="left:640px;top:279px;" width="8" height="9" viewBox="0 0 8 9" fill="#5f6368"><path d="M0 0l8 4.5L0 9z"/></svg>
<svg class="i" style="left:325.5px;top:328px;" width="20" height="20" viewBox="0 0 24 24" fill="#5f6368"><path d="M9 4v3h5v12h3V7h5V4H9zm-6 8h3v7h3v-7h3V9H3v3z"/></svg>
<div class="t" style="left:355px;top:330px;font-size:15px;color:#3c4043;font-weight:400;letter-spacing:0.35px;">Размер шрифта</div>
<svg class="i" style="left:640px;top:333px;" width="8" height="9" viewBox="0 0 8 9" fill="#5f6368"><path d="M0 0l8 4.5L0 9z"/></svg>
<svg class="i" style="left:325.5px;top:363px;" width="20" height="20" viewBox="0 0 24 24" fill="#5f6368"><path d="M2 3h5v2H4v3H2zM2 16h2v3h3v2H2zM22 3h-5v2h3v3h2zM22 16h-2v3h-3v2h5z"/><path d="M2 11h6.5L6.5 9 7.8 7.7 12 12 7.8 16.3 6.5 15 8.5 13H2z"/><path d="M22 11h-6.5L17.5 9 16.2 7.7 12 12 16.2 16.3 17.5 15 15.5 13H22z"/></svg>
<div class="t" style="left:355px;top:365px;font-size:15px;color:#3c4043;font-weight:400;letter-spacing:0.5px;">Объединить ячейки</div>
<svg class="i" style="left:640px;top:368px;" width="8" height="9" viewBox="0 0 8 9" fill="#5f6368"><path d="M0 0l8 4.5L0 9z"/></svg>
<svg class="i" style="left:325.5px;top:417px;" width="20" height="20" viewBox="0 0 24 24" fill="#5f6368"><path d="M18 2H6c-.55 0-1 .45-1 1v10c0 1.1.9 2 2 2h3v6c0 .55.45 1 1 1h2c.55 0 1-.45 1-1v-6h3c1.1 0 2-.9 2-2V3c0-.55-.45-1-1-1zm-1 9H7V4h3v3h2V4h1v3h2V4h2v7z"/></svg>
<div class="t" style="left:355px;top:419px;font-size:15px;color:#3c4043;font-weight:400;letter-spacing:0.52px;">Условное форматирование</div>
<svg class="i" style="left:325.5px;top:452px;" width="20" height="20" viewBox="0 0 24 24" fill="#5f6368"><path transform="translate(12 12) scale(1.2) translate(-12 -13)" d="M12 3.5c-4.2 4.2-6.5 7.2-6.5 10.5a6.5 6.5 0 0 0 13 0c0-3.3-2.3-6.3-6.5-10.5zm0 2.8c2.9 3 4.5 5.3 4.5 7.7H7.5c0-2.4 1.6-4.7 4.5-7.7z"/></svg>
<div class="t" style="left:355px;top:454px;font-size:15px;color:#3c4043;font-weight:400;letter-spacing:0.54px;">Чередование цветов</div>
<svg class="i" style="left:325.5px;top:506px;" width="20" height="20" viewBox="0 0 24 24" fill="#5f6368"><path d="M3.27 5L2 6.27l6.97 6.97L6.5 19h3l1.57-3.66L16.73 21 18 19.73 3.55 5.27 3.27 5zM6 5v.18L8.82 8h2.4l-.72 1.68 2.1 2.1L14.21 8H20V5H6z"/></svg>
<div class="t" style="left:355px;top:508px;font-size:15px;color:#3c4043;font-weight:400;letter-spacing:0.5px;">Очистить форматирование</div>
<div class="r" style="left:311px;top:310.5px;width:355px;height:1px;background:#dadce0;"></div>
<div class="r" style="left:311px;top:400px;width:355px;height:1px;background:#dadce0;"></div>
<div class="r" style="left:311px;top:489px;width:355px;height:1px;background:#dadce0;"></div>
<div class="t" style="left:607.5px;top:508.5px;font-size:15px;color:#5f6368;font-weight:400;letter-spacing:0.7px;">Ctrl+\</div>
</body></html>
